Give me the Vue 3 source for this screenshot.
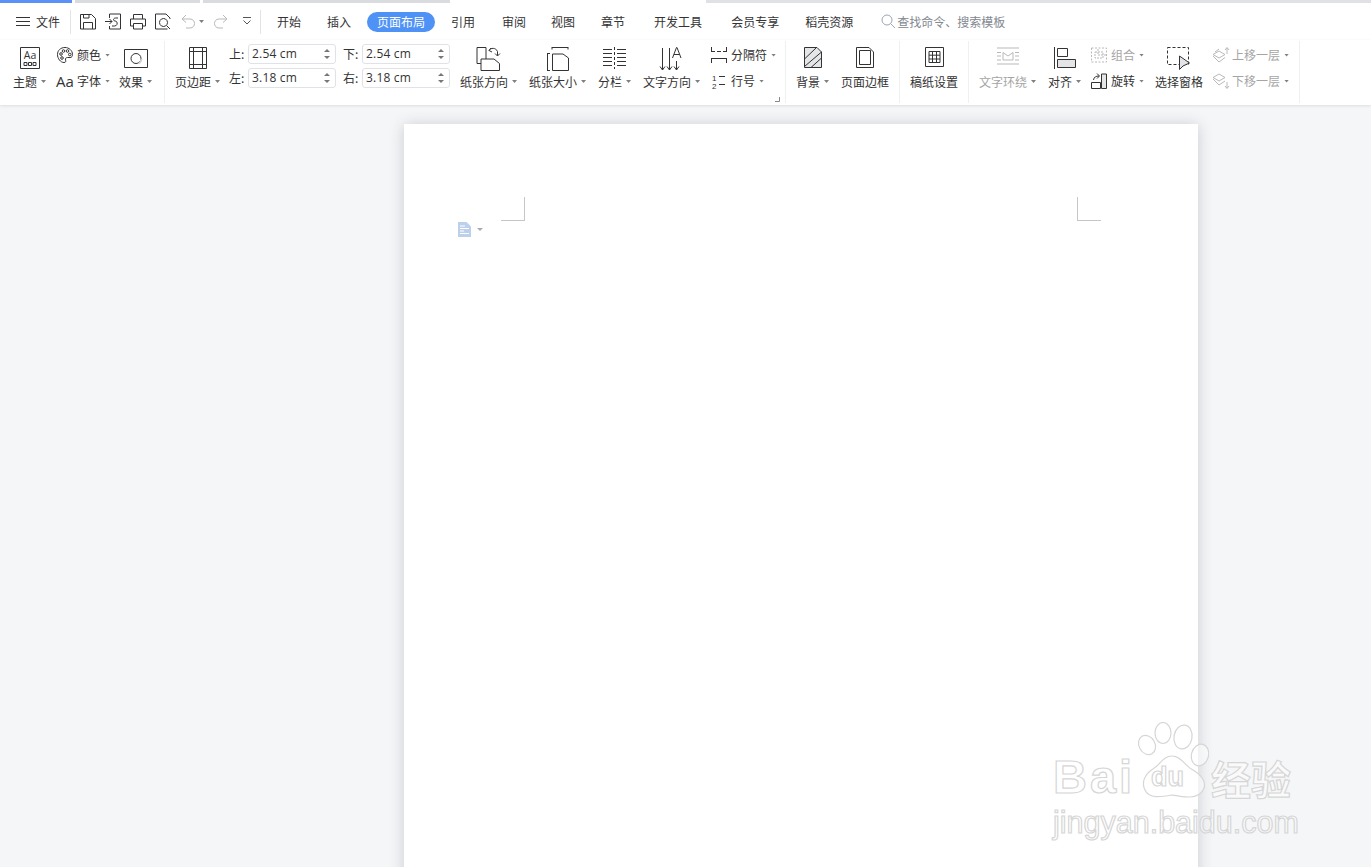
<script setup>
const tabs = [
  { t: '开始', m: 16 }, { t: '插入', m: 26 }, { t: '页面布局', m: 16, on: true }, { t: '引用', m: 16 },
  { t: '审阅', m: 27 }, { t: '视图', m: 25 }, { t: '章节', m: 26 }, { t: '开发工具', m: 29 },
  { t: '会员专享', m: 29 }, { t: '稻壳资源', m: 26 }
]
const fields = [
  { l: '上:', v: '2.54 cm' }, { l: '下:', v: '2.54 cm' },
  { l: '左:', v: '3.18 cm' }, { l: '右:', v: '3.18 cm' }
]
</script>

<template>
  <div class="app">
    <div class="strip">
      <i class="s blue"></i><i class="s g1"></i><i class="s g2"></i><i class="s g3"></i><i class="s g4"></i>
    </div>

    <header class="titlebar">
      <svg class="ic" width="14" height="10" viewBox="0 0 14 10"><path d="M0 .5H14M0 4.5H14M0 8.5H14"/></svg>
      <span class="file">文件</span>
      <i class="vsep first"></i>
      <div class="quick">
        <svg class="ic" width="16" height="17" viewBox="0 0 16 17"><path d="M.5 1.500H11.500L15.500 5.500V16H.5Z M3.500 16V9.500H12.500V16 M3.500 2V5H9V2"/></svg>
        <svg class="ic" width="16" height="17" viewBox="0 0 16 17"><path d="M4.500 5V1H15.500V16H4.500V13 M0 8.500H7M4.500 6L7 8.500L4.500 11 M7 13H9.500C13 13 13 8 10 8C8 8 8 5 10.500 5H13"/></svg>
        <svg class="ic" width="16" height="17" viewBox="0 0 16 17"><path d="M3.500 6V1.500H12.500V6 M3 13H.5V6H15.500V13H13 M3.500 10.500H12.500V16H3.500Z"/></svg>
        <svg class="ic" width="16" height="17" viewBox="0 0 16 17"><path d="M12.500 16H.5V1H11L15 5V6M8.500 5.500A4 4 0 1 0 8.501 5.500ZM11.500 12.500L15 16"/></svg>
        <svg class="ic off undo" width="15" height="17" viewBox="0 0 15 17"><path d="M5 2L1 6L5 9.500M1 6H9C15 6 15 15 9 15H5"/></svg>
        <i class="caret"></i>
        <svg class="ic off redo" width="15" height="17" viewBox="0 0 15 17"><path d="M10 2L14 6L10 9.500M14 6H6C0 6 0 15 6 15H10"/></svg>
        <svg class="ic more" width="10" height="9" viewBox="0 0 10 9"><path d="M1 .5H9M1.500 3.500L5 7L8.500 3.500"/></svg>
      </div>
      <i class="vsep second"></i>
      <span
        v-for="tab in tabs"
        :key="tab.t"
        class="tab"
        :class="{ active: tab.on }"
        :style="{ marginLeft: tab.m + 'px' }"
      >{{ tab.t }}</span>
      <svg class="ic search" width="15" height="15" viewBox="0 0 15 15"><circle cx="6" cy="6" r="5"/><path d="M9.500 9.500L14 14"/></svg>
      <span class="search-text">查找命令、搜索模板</span>
    </header>

    <section class="ribbon">
      <!-- 主题 -->
      <div class="group g-theme">
        <div class="big">
          <div class="slot">
            <svg class="ic" width="20" height="22" viewBox="0 0 20 22">
              <path d="M.5.5H19.500V21.500H.5Z"/>
              <text x="10" y="12" text-anchor="middle" class="svgt">Aa</text>
              <path d="M4 15.500H7V18.500H4ZM8.500 15.500H11.500V18.500H8.500ZM13 15.500H16V18.500H13Z"/>
            </svg>
          </div>
          <div class="label">主题<i class="caret"></i></div>
        </div>
        <div class="col ml11">
          <div class="row">
            <span class="ri">
              <svg class="ic" width="16" height="16" viewBox="0 0 16 16">
                <path d="M8 .5C3.500.5.500 3.500.500 7.500C.500 11.500 3.500 15.500 7 15.500C9 15.500 9 14 8.500 13C8 11.500 9 10.500 10.500 10.500H13C15 10.500 15.500 9 15.500 7.500C15.500 3.500 12 .5 8 .5Z"/>
                <circle cx="4" cy="7" r="1.300"/><circle cx="6.500" cy="4" r="1.300"/><circle cx="10.500" cy="4" r="1.300"/><circle cx="12.800" cy="7.500" r="1.300"/><circle cx="5" cy="11" r="1.300"/>
              </svg>
            </span>
            <span>颜色</span><i class="caret"></i>
          </div>
          <div class="row">
            <span class="ri aa">Aa</span>
            <span>字体</span><i class="caret"></i>
          </div>
        </div>
        <div class="big ml9">
          <div class="slot">
            <svg class="ic effect" width="24" height="19" viewBox="0 0 24 19">
              <path d="M.5.5H23.500V18.500H.5Z"/>
              <circle cx="12" cy="9.500" r="5"/>
              <path class="soft" d="M15 14.500A6 6 0 0 0 17.500 10"/>
            </svg>
          </div>
          <div class="label">效果<i class="caret"></i></div>
        </div>
      </div>

      <!-- 页面设置 -->
      <div class="group g-page">
        <div class="big">
          <div class="slot">
            <svg class="ic" width="18" height="22" viewBox="0 0 18 22">
              <path d="M.5.5H17.500V21.500H.5Z M4.500 0V22M13.500 0V22M0 4.500H18M0 17.500H18"/>
            </svg>
          </div>
          <div class="label">页边距<i class="caret"></i></div>
        </div>
        <div class="fields">
          <div v-for="f in fields" :key="f.l" class="field">
            <span class="flabel">{{ f.l }}</span>
            <div class="spin">
              <span class="val">{{ f.v }}</span>
              <span class="arrows"><i class="up"></i><i class="down"></i></span>
            </div>
          </div>
        </div>
        <div class="big ml10">
          <div class="slot">
            <svg class="ic" width="25" height="24" viewBox="0 0 25 24">
              <path d="M10 12V.5H1V16.500H5"/>
              <path d="M5 23.500V12H18L23.500 16.500V23.500Z"/>
              <path d="M13 3.500C14.500 .5 20 .5 21.500 4.500V8.500M19 6.500L21.500 9L24 6.500M15 1L13 3.500L16 5"/>
            </svg>
          </div>
          <div class="label">纸张方向<i class="caret"></i></div>
        </div>
        <div class="big ml12">
          <div class="slot">
            <svg class="ic" width="22" height="24" viewBox="0 0 22 24">
              <path d="M.5 6V23.500M0 6.500H3M0 23.500H3"/>
              <path d="M5 .5H21M5 0V2.500M21 0V2.500"/>
              <path d="M5.500 23.500V7H16L21.500 11V23.500Z"/>
            </svg>
          </div>
          <div class="label">纸张大小<i class="caret"></i></div>
        </div>
        <div class="big ml12">
          <div class="slot">
            <svg class="ic" width="24" height="22" viewBox="0 0 24 22">
              <path d="M0 2.500H9M0 6.500H9M0 10.500H9M0 14.500H9M0 18.500H9M14 2.500H23M14 6.500H23M14 10.500H23M14 14.500H23M14 18.500H23"/>
              <path d="M11.500 0V22" stroke-dasharray="3 2"/>
            </svg>
          </div>
          <div class="label">分栏<i class="caret"></i></div>
        </div>
        <div class="big ml12">
          <div class="slot">
            <svg class="ic" width="22" height="24" viewBox="0 0 22 24">
              <path d="M1.500 1V23M-1 19.500L1.500 23L4 19.500M8.500 1V23M6 19.500L8.500 23L11 19.500M15.500 14V23M13 19.500L15.500 23L18 19.500"/>
              <path d="M11.500 11L15.500 .5H16L20 11M13 7.500H18.500"/>
            </svg>
          </div>
          <div class="label">文字方向<i class="caret"></i></div>
        </div>
        <div class="col ml11">
          <div class="row">
            <span class="ri">
              <svg class="ic" width="16" height="16" viewBox="0 0 16 16">
                <path d="M.5 0V5M15.500 0V5M.5 4.500H4M6 4.500H10M12 4.500H16M.5 11V16M15.500 11V16M0 11.500H16"/>
              </svg>
            </span>
            <span>分隔符</span><i class="caret"></i>
          </div>
          <div class="row">
            <span class="ri">
              <svg class="ic" width="16" height="16" viewBox="0 0 16 16">
                <text x="1" y="7.500" class="num">1</text><text x="1" y="15.500" class="num">2</text>
                <path d="M8 3.500H14M8 11.500H14"/>
              </svg>
            </span>
            <span>行号</span><i class="caret"></i>
          </div>
        </div>
        <svg class="ic launcher" width="5" height="5" viewBox="0 0 5 5"><path d="M4.500 0V4.500H0"/></svg>
      </div>

      <!-- 背景 -->
      <div class="group g-bg">
        <div class="big">
          <div class="slot">
            <svg class="ic" width="18" height="21" viewBox="0 0 18 21">
              <path class="hatch" d="M.5.5H13L17.500 5V20.500H.5Z"/>
              <path d="M.5 12L12 1M.5 19.500L17.500 5M7 20.500L17.500 11"/>
            </svg>
          </div>
          <div class="label">背景<i class="caret"></i></div>
        </div>
        <div class="big ml12">
          <div class="slot">
            <svg class="ic" width="18" height="21" viewBox="0 0 18 21">
              <path d="M.5.5H13L17.500 5V20.500H.5Z M3.500 3.500H14.500V17.500H3.500Z"/>
            </svg>
          </div>
          <div class="label">页面边框</div>
        </div>
      </div>

      <!-- 稿纸 -->
      <div class="group g-paper">
        <div class="big">
          <div class="slot">
            <svg class="ic" width="19" height="20" viewBox="0 0 19 20">
              <path d="M.5.5H18.500V19.500H.5Z M4 4.500H15V15.500H4Z M4 8.200H15M4 12H15M7.500 4.500V15.500M11.500 4.500V15.500"/>
            </svg>
          </div>
          <div class="label">稿纸设置</div>
        </div>
      </div>

      <!-- 排列 -->
      <div class="group g-arrange">
        <div class="big off">
          <div class="slot">
            <svg class="ic off" width="22" height="18" viewBox="0 0 22 18">
              <path d="M0 1H22M0 17H22M0 5.500H4M0 9H4M0 13H4M18 5.500H22M18 9H22M18 13H22"/>
              <path d="M6 5.500L11 9L16 5.500V13H6Z"/>
            </svg>
          </div>
          <div class="label">文字环绕<i class="caret"></i></div>
        </div>
        <div class="big ml12">
          <div class="slot">
            <svg class="ic" width="22" height="22" viewBox="0 0 22 22">
              <path d="M.5 0V22"/>
              <path d="M3.500 1.500H13.500V9.500H3.500Z"/>
              <path class="fillg" d="M3.500 12.500H21.500V20.500H3.500Z"/>
            </svg>
          </div>
          <div class="label">对齐<i class="caret"></i></div>
        </div>
        <div class="col ml10">
          <div class="row off">
            <span class="ri">
              <svg class="ic off" width="16" height="16" viewBox="0 0 16 16">
                <path d="M.5 1H15.500V15H.5Z" stroke-dasharray="2 1.500"/>
                <path d="M4 5H12V11H4Z M7 2V8H15" stroke-dasharray="2 1"/>
              </svg>
            </span>
            <span>组合</span><i class="caret"></i>
          </div>
          <div class="row">
            <span class="ri">
              <svg class="ic" width="16" height="16" viewBox="0 0 16 16">
                <path d="M.5 15.500V9.500H9.500V15.500Z"/>
                <path class="fillg" d="M10.500 1H15.500V15.500H10.500Z"/>
                <path d="M2.500 7C3 4 5 3 8 3M6 .5L8.500 3L6 5.500"/>
              </svg>
            </span>
            <span>旋转</span><i class="caret"></i>
          </div>
        </div>
        <div class="big ml11">
          <div class="slot">
            <svg class="ic" width="24" height="24" viewBox="0 0 24 24">
              <path d="M.5 .5H21.500V17.500H.5Z" stroke-dasharray="3 2"/>
              <path class="cursor" d="M12.500 9L12.500 22.500L16 19L22.500 16Z"/>
            </svg>
          </div>
          <div class="label">选择窗格</div>
        </div>
        <div class="col ml9">
          <div class="row off">
            <span class="ri">
              <svg class="ic off" width="17" height="16" viewBox="0 0 17 16">
                <path d="M7 4L13 7.500L7 11L1 7.500Z"/>
                <path d="M1 9L7 15L13 10.500M3 5L7 2"/>
                <path d="M15 7V1M13 3L15 .5L17 3"/>
              </svg>
            </span>
            <span>上移一层</span><i class="caret"></i>
          </div>
          <div class="row off">
            <span class="ri">
              <svg class="ic off" width="17" height="16" viewBox="0 0 17 16">
                <path d="M7 1L13 4.500L7 8L1 4.500Z"/>
                <path d="M1 6L7 12L13 8"/>
                <path d="M15 9V15M13 13L15 15.500L17 13"/>
              </svg>
            </span>
            <span>下移一层</span><i class="caret"></i>
          </div>
        </div>
      </div>
    </section>

    <main class="canvas">
      <div class="page">
        <div class="marks">
          <i class="mark tl"></i>
          <i class="mark tr"></i>
        </div>
        <div class="docline">
          <svg width="13" height="15" viewBox="0 0 13 15">
            <path class="docicon" d="M0 0H8.500L13 4.500V15H0Z"/>
            <path class="doclines" d="M2 4H7M2 6.500H11M2 9H6M2 11.500H11"/>
          </svg>
          <i class="doccaret"></i>
        </div>
      </div>
    </main>

    <div class="watermark">
      <div class="wm-top">
        <span class="bai">Bai</span>
        <div class="paw">
          <svg width="74" height="78" viewBox="0 0 74 78">
            <ellipse cx="12" cy="23" rx="8" ry="10" transform="rotate(-30 12 23)"/>
            <ellipse cx="28" cy="11" rx="8" ry="10.500"/>
            <ellipse cx="48" cy="15" rx="9" ry="12" transform="rotate(10 48 15)"/>
            <ellipse cx="65" cy="33" rx="8.500" ry="11" transform="rotate(15 65 33)"/>
            <path d="M37 34C46 34 50 44 58 48C68 54 72 62 68 68C63 78 48 75 37 73C26 75 14 77 10 68C6 60 10 52 18 47C25 43 28 34 37 34Z"/>
          </svg>
          <span class="du">du</span>
        </div>
        <span class="jy">经验</span>
      </div>
      <div class="wm-url">jingyan.baidu.com</div>
    </div>
  </div>
</template>

<style scoped>
.app {
  position: relative;
  width: 1371px;
  height: 867px;
  overflow: hidden;
  display: flex;
  flex-direction: column;
  background: #f5f6f8;
  color: #333;
  font: 12px/16px "Noto Sans CJK SC", "Liberation Sans", sans-serif;
}
i { display: block; font-style: normal; }

.strip { display: flex; height: 3px; background: #fff; flex: none; }
.s { height: 3px; }
.blue { width: 72px; background: #5b91f6; }
.g1 { width: 125px; margin-left: 3px; background: #dadbdf; }
.g2 { width: 247px; margin-left: 3px; background: #dadbdf; }
.g3 { width: 256px; background: #fff; }
.g4 { flex: 1; background: #e0e1e5; }

.titlebar {
  flex: none;
  height: 37px;
  padding-left: 16px;
  display: flex;
  align-items: center;
  background: #fff;
}
.ic { display: block; flex: none; fill: none; stroke: #333; stroke-width: 1; overflow: visible; }
.ic.off { stroke: #b9b9b9; }
.file { margin-left: 6px; }
.vsep { width: 1px; height: 24px; background: #e3e3e3; flex: none; }
.vsep.first { margin-left: 10px; }
.vsep.second { margin-left: 8px; }
.quick { display: flex; align-items: center; gap: 9px; margin-left: 9px; }
.undo { margin-left: 1px; }
.quick .caret { margin-left: -6px; }
.redo { margin-left: 0; }
.more { margin-left: 5px; stroke: #555; }
.tab { flex: none; color: #333; }
.tab.active {
  width: 68px;
  height: 20px;
  border-radius: 10px;
  background: #4f92f6;
  color: #fff;
  text-align: center;
  line-height: 20px;
}
.search { margin-left: 28px; stroke: #9aa5b5; }
.search-text { margin-left: 1px; color: #83888f; }

.ribbon {
  flex: none;
  height: 65px;
  display: flex;
  align-items: flex-start;
  background: #fff;
  box-shadow: 0 1px 3px rgba(0, 0, 0, .1);
  position: relative;
}
.group {
  position: relative;
  flex: none;
  box-sizing: border-box;
  height: 62px;
  margin-top: 1px;
  padding: 2px 0 0 10px;
  display: flex;
  align-items: flex-start;
  border-right: 1px solid #eef0f2;
}
.g-theme { width: 165px; padding-left: 13px; }
.g-page { width: 621px; }
.g-bg { width: 114px; }
.g-paper { width: 69px; }
.g-arrange { width: 331px; }

.big { display: flex; flex-direction: column; align-items: center; flex: none; }
.slot { height: 28px; padding-top: 4px; box-sizing: border-box; display: flex; justify-content: center; }
.effect { margin-top: 2px; }
.label { height: 24px; padding-top: 3px; box-sizing: border-box; display: flex; align-items: flex-start; white-space: nowrap; }
.label .caret { margin-top: 6px; }
.big.off, .row.off { color: #a5a5a5; }

.col { display: flex; flex-direction: column; flex: none; margin-top: -1px; }
.row { height: 26px; display: flex; align-items: center; white-space: nowrap; }
.ri { width: 16px; margin-right: 4px; display: flex; justify-content: center; }
.aa { font: 15px/16px "Open Sans", sans-serif; color: #333; }

.caret {
  flex: none;
  width: 5px;
  height: 3px;
  margin-left: 4px;
  background: #808080;
  clip-path: polygon(0 0, 100% 0, 50% 100%);
}

.ml9 { margin-left: 9px; }
.ml10 { margin-left: 10px; }
.ml11 { margin-left: 11px; }
.ml12 { margin-left: 12px; }

.svgt { font: 10.500px "Open Sans", sans-serif; fill: #333; stroke: none; }
.num { font: 8px "Liberation Sans", sans-serif; fill: #333; stroke: none; }
.soft { stroke: #d5d5d5; stroke-width: 2; }
.hatch { fill: #e5e6e8; }
.fillg { fill: #e4e5e7; }
.cursor { fill: #e2e4e7; stroke: #333; }

.fields {
  margin-left: 9px;
  margin-top: 1px;
  display: grid;
  grid-template-columns: 107px 107px;
  column-gap: 7px;
  row-gap: 4px;
}
.field { display: flex; align-items: center; }
.flabel { width: 19px; flex: none; }
.spin {
  width: 88px;
  height: 20px;
  box-sizing: border-box;
  padding: 0 5px 0 3px;
  border: 1px solid #dfe2e6;
  border-radius: 3px;
  display: flex;
  align-items: center;
  justify-content: space-between;
}
.val { font: 12px/18px "Open Sans", sans-serif; letter-spacing: .2px; color: #333; }
.arrows { display: flex; flex-direction: column; gap: 4px; }
.up, .down { width: 0; height: 0; border-left: 3px solid transparent; border-right: 3px solid transparent; }
.up { border-bottom: 3px solid #777; }
.down { border-top: 3px solid #777; }
.launcher { position: absolute; left: 610px; top: 56px; stroke: #888; }

.canvas { flex: 1; min-height: 0; padding: 19px 0 0 404px; }
.page {
  width: 794px;
  height: 760px;
  background: #fff;
  box-shadow: 0 1px 14px rgba(50, 55, 65, .22);
  padding-top: 73px;
  box-sizing: border-box;
}
.marks { display: flex; justify-content: space-between; padding: 0 97px; }
.mark { width: 24px; height: 24px; box-sizing: border-box; border-bottom: 1px solid #c6c6c6; }
.mark.tl { border-right: 1px solid #c6c6c6; }
.mark.tr { border-left: 1px solid #c6c6c6; }
.docline { margin: 1px 0 0 54px; display: flex; align-items: center; }
.docicon { fill: #bcd0ec; }
.doclines { fill: none; stroke: #fff; stroke-width: 1; }
.doccaret {
  margin-left: 6px;
  width: 0;
  height: 0;
  border-left: 3px solid transparent;
  border-right: 3px solid transparent;
  border-top: 3px solid #aaa;
}

.watermark {
  position: absolute;
  left: 1053px;
  top: 722px;
  width: 250px;
  pointer-events: none;
}
.wm-top { display: flex; align-items: flex-end; height: 78px; }
.bai, .du, .jy, .wm-url {
  color: rgba(255, 255, 255, .55);
  -webkit-text-stroke: 1.2px #d6d6d6;
}
.bai { font: 700 47px/46px "Liberation Sans", sans-serif; letter-spacing: 3px; width: 82px; flex: none; }
.paw { position: relative; width: 74px; height: 78px; flex: none; }
.paw svg { display: block; fill: rgba(255, 255, 255, .55); stroke: #d6d6d6; stroke-width: 1.200; }
.du {
  position: absolute;
  left: 16px;
  top: 40px;
  font: 700 27px/30px "Liberation Sans", sans-serif;
}
.jy { font: 700 40px/44px "Noto Sans CJK SC", sans-serif; margin-left: 2px; white-space: nowrap; }
.wm-url { margin-top: 4px; font: 30.500px/36px "Liberation Sans", sans-serif; white-space: nowrap; }
</style>
